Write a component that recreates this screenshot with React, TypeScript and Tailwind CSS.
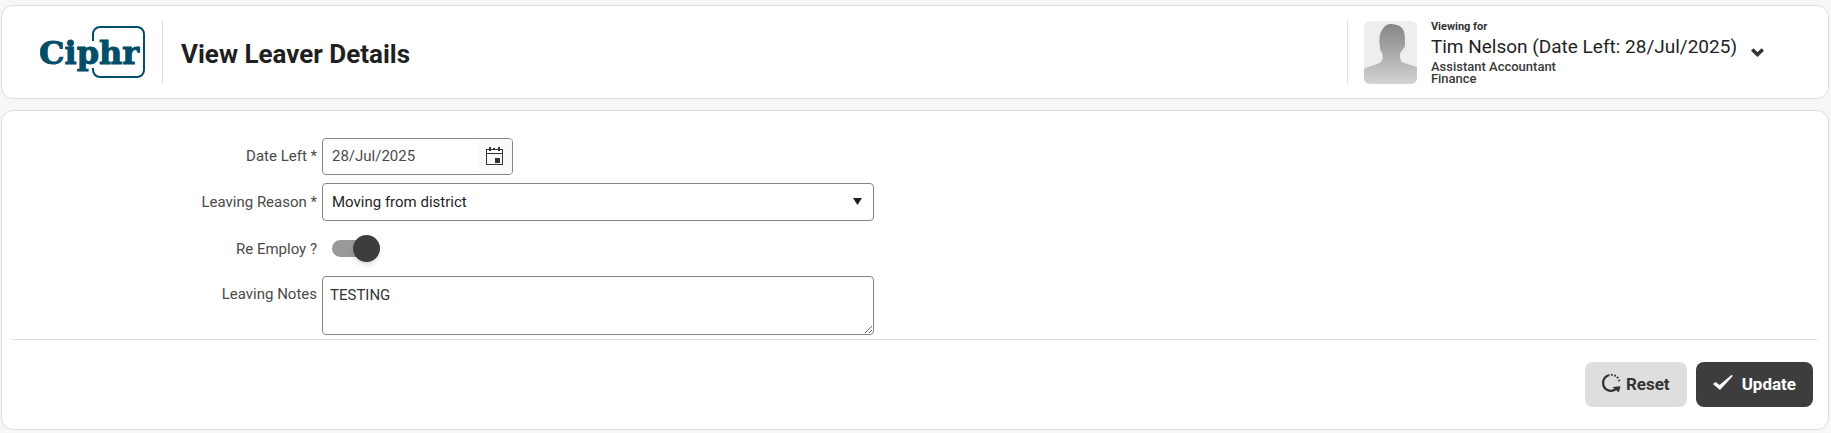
import { useState } from "react";

function CiphrLogo() {
  return (
    <svg width="108" height="54" viewBox="0 0 108 54" role="img" aria-label="Ciphr" className="shrink-0">
      <path
        d="M53 16V9a7 7 0 0 1 7-7h37a7 7 0 0 1 7 7v36a7 7 0 0 1-7 7H60a7 7 0 0 1-7-7v-2"
        fill="none"
        stroke="#024d67"
        strokeWidth="2"
      />
      <text
        x="-1"
        y="39"
        fill="#024d67"
        stroke="#024d67"
        strokeWidth="1"
        className="font-['DejaVu_Serif',serif] text-[32px] font-bold"
      >
        Ciphr
      </text>
    </svg>
  );
}

function Avatar() {
  return (
    <svg width="53" height="63" viewBox="0 0 53 63" role="img" aria-label="Tim Nelson" className="shrink-0 rounded-md">
      <defs>
        <linearGradient id="person" x1="0" y1="0" x2="0" y2="1">
          <stop offset="0" stopColor="#858585" />
          <stop offset="1" stopColor="#d3d3d3" />
        </linearGradient>
      </defs>
      <rect width="53" height="63" fill="#eeeeee" />
      <path
        d="M0 63V48c5-3 13-4 17-7 2-2 2-5 1-9-2-2-2-4-2-6-1-6-1-13 2-17 2-4 5-6 8-6 5 0 9 1 12 4 3 4 3 8 3 14 0 2 0 5-1 6-2 2-3 4-4 6 0 3 0 6 2 8 4 2 10 3 15 5v17z"
        fill="url(#person)"
      />
    </svg>
  );
}

function CalendarIcon() {
  return (
    <svg width="17" height="18" viewBox="0 0 17 18" fill="#333238" aria-hidden="true">
      <path d="M0 2h17v16H0V2zm1 5v10h15V7H1z" fillRule="evenodd" />
      <path d="M1 3h15v3H1z" fill="#fff" />
      <path d="M3 0h2v4H3zM7 1h2v2H7zM12 0h2v4h-2zM9 11h5v5H9z" />
    </svg>
  );
}

function ResetIcon() {
  return (
    <svg width="19" height="20" viewBox="0 0 19 20" aria-hidden="true" className="mb-1">
      <path d="M6 2.600A8 8 0 0 0 5 16.800c3 1.600 6 1.400 9-.8" fill="none" stroke="#333" strokeWidth="2.200" />
      <path d="M6 2.600A8 8 0 0 1 17.400 9" fill="none" stroke="#333" strokeWidth="2" strokeDasharray="1.600 1.600" />
      <path d="M10.500 14l8-.8-1.700 6.300z" fill="#333" />
    </svg>
  );
}

function CheckIcon() {
  return (
    <svg width="20" height="15" viewBox="0 0 20 15" fill="#fff" aria-hidden="true" className="mb-1">
      <path d="M0 9 2.500 7l4 3L18.500 0 20 .8 7 15z" />
    </svg>
  );
}

const labelClass = "w-[304px] shrink-0 text-right text-[15px] leading-5 text-[#4a4a4a]";

export default function App() {
  const [dateLeft, setDateLeft] = useState("28/Jul/2025");
  const [reEmploy, setReEmploy] = useState(true);

  return (
    <div className="min-h-screen bg-[#f7f7f7] px-px pt-[5px] font-[Roboto,sans-serif] text-[#1f1f1f]">
      <header className="mr-px flex h-[94px] items-center rounded-xl border border-[#dedede] bg-white pr-[64px] pl-[38px]">
        <CiphrLogo />
        <div className="ml-[14px] h-16 w-px bg-[#dedede]" />
        <h1 className="ml-[18px] pt-1 text-[26px] leading-8 font-bold">View Leaver Details</h1>

        <div className="ml-auto flex h-16 items-center border-l border-[#dedede] pl-4">
          <Avatar />
          <div className="ml-[14px] pt-[2px] whitespace-nowrap">
            <p className="text-[11px] leading-3 font-bold text-[#333]">Viewing for</p>
            <p className="text-[19px] leading-7">Tim Nelson (Date Left: 28/Jul/2025)</p>
            <p className="text-[13px] leading-3 font-medium text-[#3a3a3a]">Assistant Accountant</p>
            <p className="text-[13px] leading-3 font-medium text-[#3a3a3a]">Finance</p>
          </div>
          <button type="button" aria-label="Change person" className="ml-[14px]">
            <svg width="13" height="9" viewBox="0 0 13 9" fill="none" stroke="#333" strokeWidth="3.500">
              <path d="M1.200 1.500 6.500 6.500l5.300-5" />
            </svg>
          </button>
        </div>
      </header>

      <form
        className="mt-[11px] mr-px rounded-xl border border-[#dedede] bg-white px-[11px] pt-[26px] pb-[22px]"
        onSubmit={(e) => e.preventDefault()}
      >
        <div className="space-y-2">
          <div className="flex h-[38px] items-center gap-[5px]">
            <label htmlFor="date-left" className={labelClass}>
              Date Left *
            </label>
            <div className="flex h-[37px] w-[191px] overflow-hidden rounded-[4px] border border-[#858585]">
              <input
                id="date-left"
                type="text"
                value={dateLeft}
                onChange={(e) => setDateLeft(e.target.value)}
                className="min-w-0 flex-1 pl-[9px] text-[15px] text-[#4a4a4a] outline-none"
              />
              <button
                type="button"
                aria-label="Open calendar"
                className="flex w-[33px] items-center justify-center bg-[#fafafa] pr-[2px]"
              >
                <CalendarIcon />
              </button>
            </div>
          </div>

          <div className="flex h-[38px] items-center gap-[5px]">
            <label htmlFor="leaving-reason" className={labelClass}>
              Leaving Reason *
            </label>
            <div className="grid w-[552px] items-center">
              <select
                id="leaving-reason"
                className="col-start-1 row-start-1 h-[38px] appearance-none rounded-[4px] border border-[#858585] bg-white pl-[9px] text-[15px]"
              >
                <option>Moving from district</option>
              </select>
              <svg
                width="9"
                height="7"
                viewBox="0 0 9 7"
                className="pointer-events-none col-start-1 row-start-1 mr-3 mb-[2px] justify-self-end"
                aria-hidden="true"
              >
                <path d="M0 0h9L4.500 7z" fill="#1f1f1f" />
              </svg>
            </div>
          </div>

          <div className="flex h-[39px] items-center gap-[5px]">
            <label htmlFor="re-employ" className={labelClass}>
              Re Employ ?
            </label>
            <input
              id="re-employ"
              type="checkbox"
              role="switch"
              checked={reEmploy}
              onChange={(e) => setReEmploy(e.target.checked)}
              className="ml-[10px] flex h-[17px] w-12 appearance-none items-center rounded-full bg-[#999] before:size-[27px] before:shrink-0 before:rounded-full before:bg-[#3d3d3d] before:shadow-md checked:before:ml-auto"
            />
          </div>

          <div className="flex items-start gap-[5px]">
            <label htmlFor="leaving-notes" className={`${labelClass} pt-2`}>
              Leaving Notes
            </label>
            <textarea
              id="leaving-notes"
              defaultValue="TESTING"
              className="block h-[59px] w-[552px] rounded-[4px] border border-[#858585] px-[7px] pt-2 text-[15px] leading-5 text-[#333]"
            />
          </div>
        </div>

        <div className="mt-1 flex justify-end gap-[9px] border-t border-[#dedede] pt-[22px] pr-1">
          <button
            type="reset"
            className="flex h-[45px] items-center gap-[5px] rounded-lg bg-[#dedede] px-[17px] text-[17px] font-bold text-[#333]"
          >
            <ResetIcon />
            Reset
          </button>
          <button
            type="submit"
            className="flex h-[45px] items-center gap-[9px] rounded-lg bg-[#3d3d3d] px-[17px] text-[17px] font-bold text-white"
          >
            <CheckIcon />
            Update
          </button>
        </div>
      </form>
    </div>
  );
}
